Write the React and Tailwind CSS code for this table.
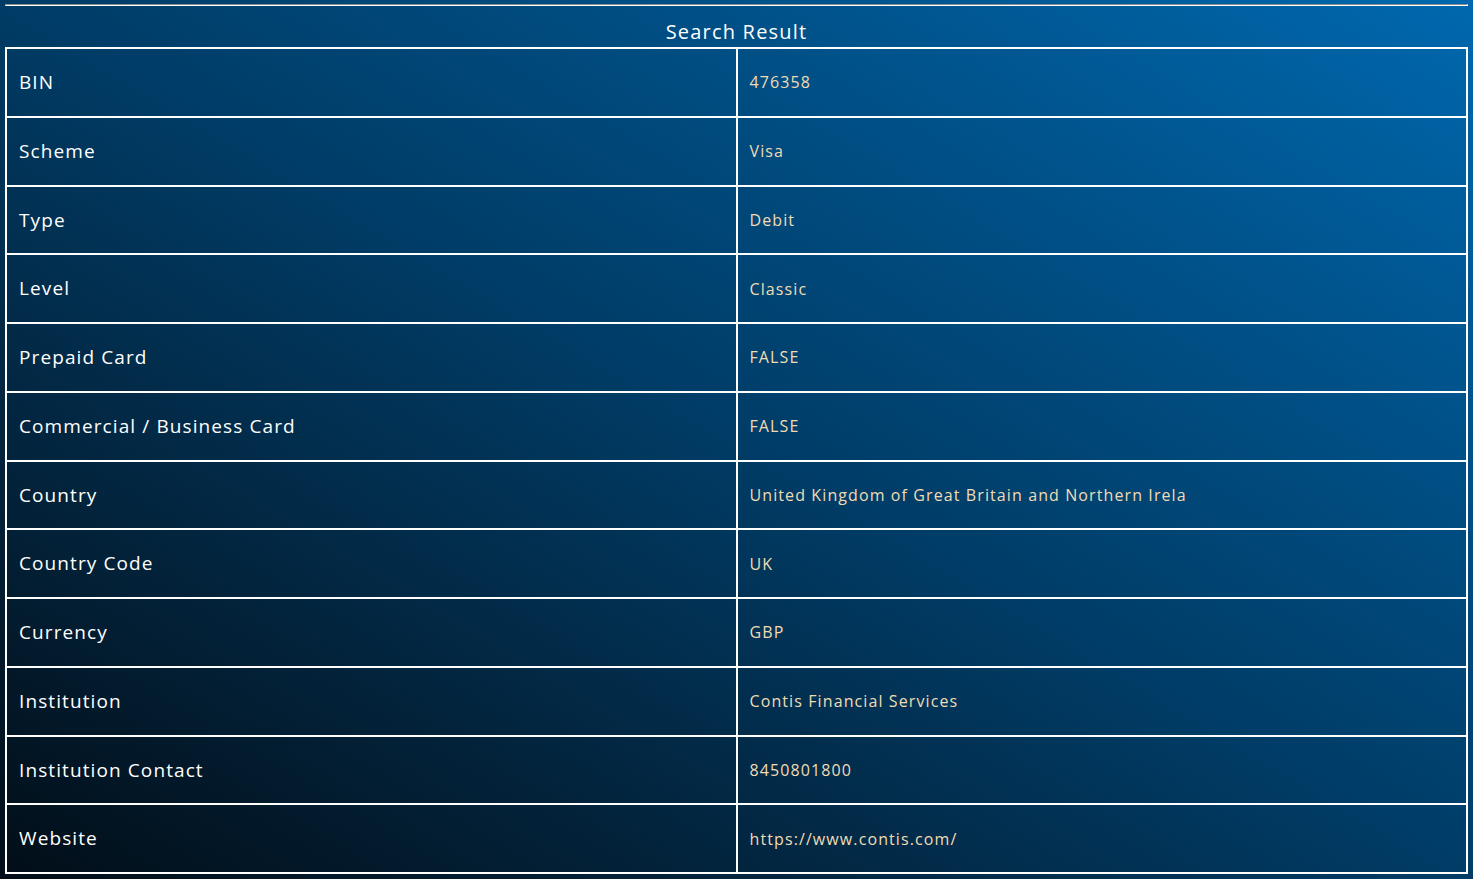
import React from 'react';

const rows = [
  ['BIN', '476358'],
  ['Scheme', 'Visa'],
  ['Type', 'Debit'],
  ['Level', 'Classic'],
  ['Prepaid Card', 'FALSE'],
  ['Commercial / Business Card', 'FALSE'],
  ['Country', 'United Kingdom of Great Britain and Northern Irela'],
  ['Country Code', 'UK'],
  ['Currency', 'GBP'],
  ['Institution', 'Contis Financial Services'],
  ['Institution Contact', '8450801800'],
  ['Website', 'https://www.contis.com/'],
];

export default function App() {
  return (
    <div className="min-h-[879px] bg-linear-to-tr from-[#020e18] via-[#003c66] to-[#0068ae] px-[5px] pt-[4px] pb-[6px] font-['Open_Sans',sans-serif]">
      {/* inset rule */}
      <div className="h-0 border-t border-l border-t-[#8c8c8c] border-l-[#8c8c8c] border-b border-r border-b-white border-r-white" />

      <h2 className="text-center text-white text-[20px] leading-[24px] tracking-[1.2px] mt-[14px] mb-[3px]">Search Result</h2>

      <div className="grid grid-cols-2 border-l-2 border-t-2 border-white">
        {rows.map(([label, value]) => (
          <React.Fragment key={label}>
            <div className="h-[68.75px] border-r-2 border-b-2 border-white flex items-center pl-[12px] text-white text-[19px] tracking-[1.1px]">
              {label}
            </div>
            <div className="h-[68.75px] border-r-2 border-b-2 border-white flex items-center pl-[12px] text-[#f0dcb4] text-[16px] tracking-[1.1px]">
              {value}
            </div>
          </React.Fragment>
        ))}
      </div>
    </div>
  );
}
